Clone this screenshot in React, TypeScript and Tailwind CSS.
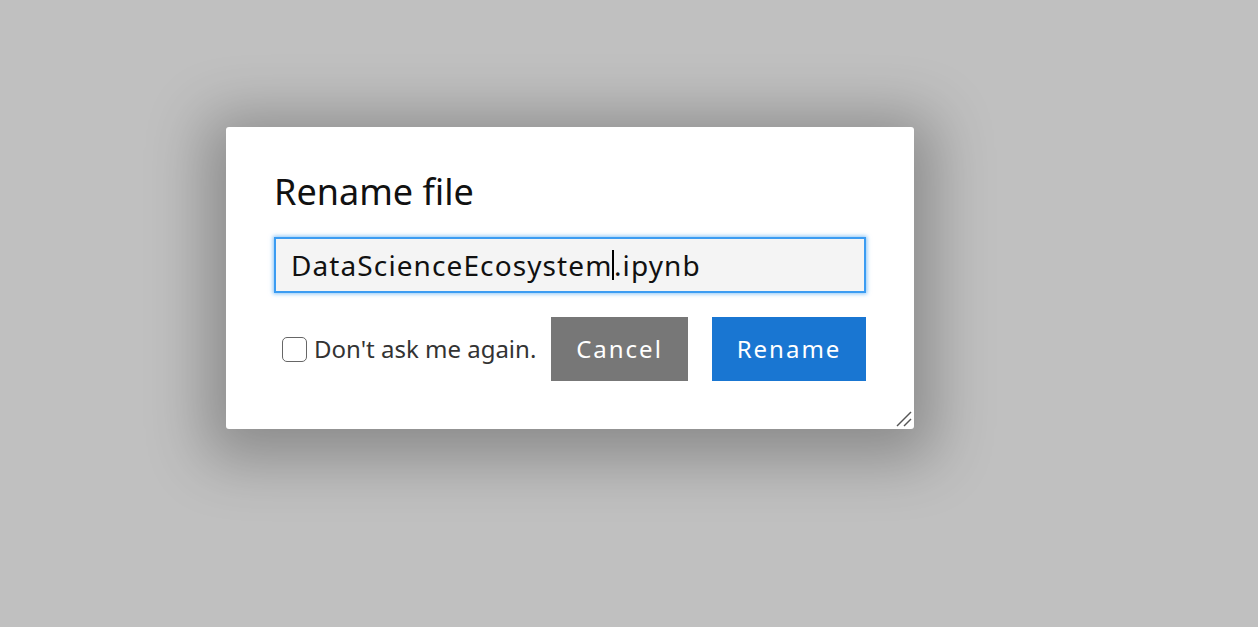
import React from "react";

const font = { fontFamily: '"Noto Sans", "Open Sans", sans-serif' };

export default function App() {
  return (
    <div className="w-[1258px] h-[627px] bg-[#c0c0c0] flex items-start pl-[226px] pt-[127px]" style={font}>
      <div className="relative w-[688px] h-[302px] bg-white rounded-[3px] shadow-[0_10px_60px_20px_rgba(0,0,0,0.28)] px-[48px] pt-[42px]">
        <h2 className="text-[36px] leading-[46px] text-[#111] font-normal">Rename file</h2>

        <div className="mt-[22px] h-[56px] border-2 border-[#3b9cf2] bg-[#f4f4f4] shadow-[0_0_4px_1px_rgba(59,156,242,0.6)] flex items-center pl-[15px] text-[28px] tracking-[1.1px] text-[#111]">
          <span>DataScienceEcosystem</span>
          <span className="w-[1.5px] h-[30px] bg-black"></span>
          <span>.ipynb</span>
        </div>

        <div className="mt-[24px] flex items-center justify-between">
          <label className="flex items-center gap-[7px] ml-[8px] text-[24px] text-[#333]">
            <span className="w-[25px] h-[25px] border-[1.5px] border-[#666] rounded-[5px] bg-white"></span>
            <span>Don't ask me again.</span>
          </label>
          <div className="flex items-center gap-[24px]">
            <button className="w-[137px] h-[64px] bg-[#777777] text-white text-[24px] tracking-[2px]">Cancel</button>
            <button className="w-[154px] h-[64px] bg-[#1976d2] text-white text-[24px] tracking-[2px]">Rename</button>
          </div>
        </div>

        <svg className="absolute right-[1px] bottom-[1px]" width="18" height="18" viewBox="0 0 18 18">
          <line x1="2" y1="16" x2="16" y2="2" stroke="#555" strokeWidth="1.4" />
          <line x1="9" y1="16" x2="16" y2="9" stroke="#555" strokeWidth="1.4" />
        </svg>
      </div>
    </div>
  );
}
